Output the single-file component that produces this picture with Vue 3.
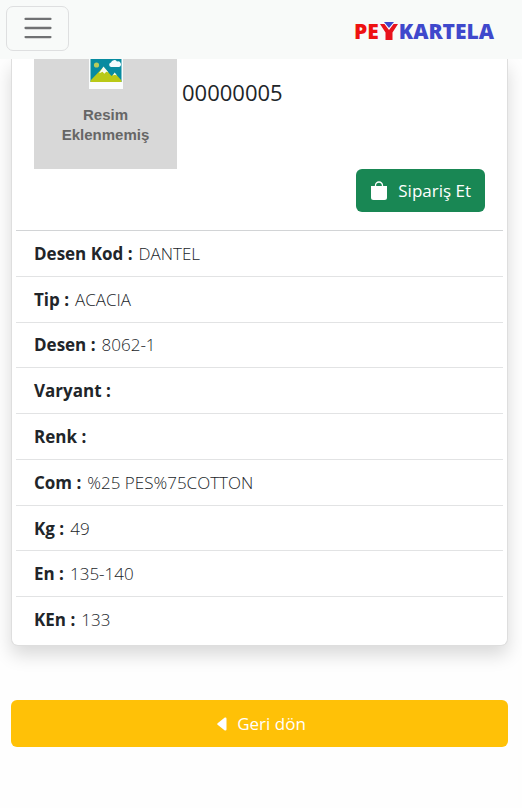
<script setup>
const details = [
  { label: 'Desen Kod', value: 'DANTEL' },
  { label: 'Tip', value: 'ACACIA' },
  { label: 'Desen', value: '8062-1' },
  { label: 'Varyant', value: '' },
  { label: 'Renk', value: '' },
  { label: 'Com', value: '%25 PES%75COTTON' },
  { label: 'Kg', value: '49' },
  { label: 'En', value: '135-140' },
  { label: 'KEn', value: '133' },
]
</script>

<template>
  <div class="page">
    <header class="navbar">
      <button class="toggler" type="button" aria-label="Menü">
        <svg width="34" height="34" viewBox="0 0 30 30" aria-hidden="true">
          <path stroke="#707173" stroke-linecap="round" stroke-width="2" d="M4 7h22M4 15h22M4 23h22" />
        </svg>
      </button>
      <a class="brand" href="#">
        <span class="brand-red">PE</span>
        <svg class="brand-mark" width="18" height="20" viewBox="0 0 18 20" role="img" aria-label="Y">
          <path fill="#e8121c" d="M0 3h5l4 5 4-5h5l-5.500 8.500V19h-7v-7.500z" />
          <path fill="#fff" d="M3 1h12L9 9z" />
          <path fill="#3f48cc" d="M4 1h10L9 7z" />
        </svg>
        <span class="brand-blue">KARTELA</span>
      </a>
    </header>

    <main class="content">
      <article class="card">
        <div class="summary">
          <div class="product">
            <div class="placeholder">
              <svg width="34" height="30" viewBox="0 0 34 30" aria-hidden="true">
                <path fill="#fafcfc" d="M0 0h34v30H0z" />
                <path fill="#078ba0" d="M1.500 0h31v23h-31z" />
                <circle cx="7.500" cy="6" r="2.600" fill="#b9cc5a" />
                <path fill="#f4fbfd" d="M22 8a2.300 2.300 0 0 1 0-4.500 3.400 3.400 0 0 1 6-1 2.800 2.800 0 0 1 2 5.500z" />
                <path fill="#b9c917" d="M1.500 23v-1.500L14.500 8l8 9 3.200-3 6.800 7.500V23z" />
                <path fill="#f7fbf0" d="M14.500 7.500l5 6-2.200-.8-2 2-1.800-2-2.500 1.300-1 .2zM25.700 13.500l2.300 3-2-.8-2.300.8z" />
              </svg>
              <span class="placeholder-text">Resim<br />Eklenmemiş</span>
            </div>
            <h1 class="code">00000005</h1>
          </div>
          <button class="btn order" type="button">
            <svg width="18" height="20" viewBox="0 0 18 20" aria-hidden="true">
              <path fill="none" stroke="#fff" stroke-width="1.300" d="M5.500 6V4.500a3.500 3.500 0 0 1 7 0V6" />
              <path fill="#fff" d="M1 5h16v11.500a2.500 2.500 0 0 1-2.500 2.500h-11A2.500 2.500 0 0 1 1 16.500z" />
            </svg>
            Sipariş Et
          </button>
        </div>

        <dl class="details">
          <div v-for="item in details" :key="item.label" class="row">
            <dt>{{ item.label }} :</dt>
            <dd>{{ item.value }}</dd>
          </div>
        </dl>
      </article>

      <button class="btn back" type="button">
        <svg width="10" height="14" viewBox="0 0 10 14" aria-hidden="true">
          <path fill="#fff" d="M.6 6.200 7.800.6Q9.500 0 9.500 1.800v10.400q0 1.800-1.700 1.200L.6 7.800q-.8-.8 0-1.600z" />
        </svg>
        Geri dön
      </button>
    </main>
  </div>
</template>

<style>
body {
  margin: 0;
  background: #fefefe;
}
</style>

<style scoped>
.page {
  color: #212529;
  font-family: "Open Sans", "Noto Sans", sans-serif;
  font-size: 17px;
  line-height: 25px;
}

.navbar {
  position: sticky;
  top: 0;
  z-index: 1;
  display: flex;
  align-items: center;
  justify-content: space-between;
  box-sizing: border-box;
  height: 59px;
  padding: 0 28px 3px 6px;
  background: #f8faf9;
}

.toggler {
  display: flex;
  align-items: center;
  justify-content: center;
  box-sizing: border-box;
  width: 63px;
  height: 45px;
  padding: 0;
  border: 1px solid #dedfe0;
  border-radius: 7px;
  background: transparent;
}

.brand {
  display: flex;
  align-items: center;
  gap: 1px;
  padding-top: 6px;
  font-size: 21px;
  font-weight: 800;
  text-decoration: none;
}

.brand-red {
  color: #ee1111;
}

.brand-blue {
  color: #3f48cc;
}

.content {
  display: flex;
  flex-direction: column;
  gap: 54px;
  padding: 0 14px 59px 11px;
}

.card {
  padding: 0 4px 3px;
  border: 1px solid #dedede;
  border-top: 0;
  border-radius: 0 0 7px 7px;
  background: #fff;
  box-shadow: 0 9px 18px rgba(0, 0, 0, 0.15);
}

.summary {
  display: flex;
  flex-direction: column;
  padding: 0 18px 18px;
}

.product {
  display: flex;
  gap: 5px;
}

.placeholder {
  display: flex;
  flex-direction: column;
  align-items: center;
  gap: 16px;
  box-sizing: border-box;
  width: 143px;
  padding-bottom: 24px;
  background: #d8d8d8;
}

.placeholder-text {
  color: #666;
  font-family: "Liberation Sans", Arial, sans-serif;
  font-size: 15px;
  font-weight: 700;
  line-height: 20px;
  text-align: center;
}

.code {
  margin: 18px 0 0;
  font-size: 22px;
  font-weight: 400;
  line-height: 30px;
}

.btn {
  display: flex;
  align-items: center;
  justify-content: center;
  gap: 10px;
  border: 0;
  border-radius: 6px;
  color: #fff;
  font-family: inherit;
  font-size: 17px;
  line-height: 25px;
}

.order {
  align-self: flex-end;
  padding: 9px 14px;
  background: #198754;
}

.back {
  padding: 11px 14px 11px 18px;
  background: #ffc107;
}

.details {
  display: grid;
  grid-auto-rows: 1fr;
  min-height: 412px;
  margin: 0;
}

.row {
  display: flex;
  align-items: center;
  gap: 6px;
  padding: 0 18px;
  border-top: 1px solid #e2e3e4;
}

.row:first-child {
  border-top-color: #d2d4d6;
}

dt {
  font-weight: 700;
}

dd {
  margin: 0;
  font-weight: 300;
}
</style>
